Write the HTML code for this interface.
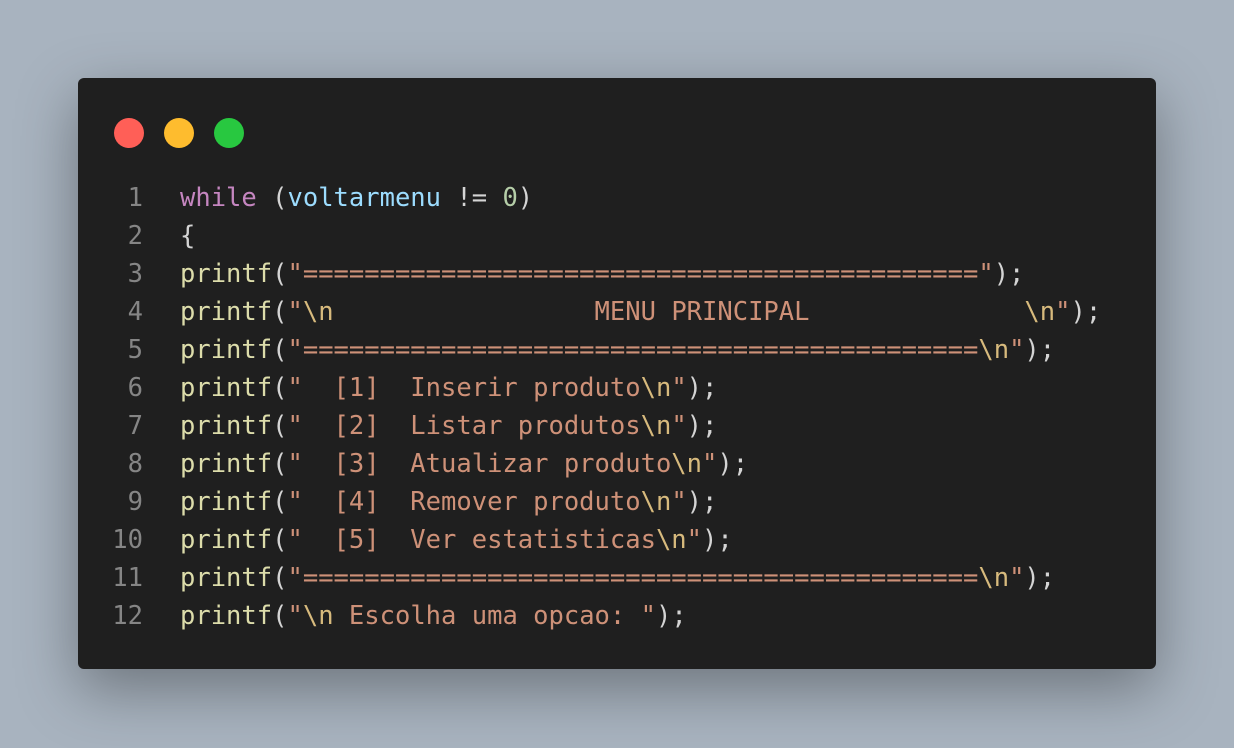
<!DOCTYPE html>
<html><head><meta charset="utf-8"><style>
html,body{margin:0;width:1234px;height:748px;overflow:hidden;background:#a8b3bf;}
.card{position:absolute;left:78px;top:78px;width:1078px;height:591px;background:#1f1f1f;border-radius:6px;box-shadow:0 20px 60px rgba(0,0,0,.35);}
.dot{position:absolute;top:40px;width:30px;height:30px;border-radius:50%;}
pre{position:absolute;left:0;top:101px;margin:0;font-family:"DejaVu Sans Mono","Liberation Mono",monospace;font-size:25.5px;line-height:38px;color:#d4d4d4;letter-spacing:0}
.n{display:inline-block;width:65px;text-align:right;color:#858585;margin-right:37px}
.k{color:#c586c0}.v{color:#9cdcfe}.num{color:#b5cea8}.f{color:#dcdcaa}.s{color:#ce9178}.e{color:#d7ba7d}
</style></head><body>
<div class="card">
<div class="dot" style="left:36px;background:#ff5f57"></div>
<div class="dot" style="left:86px;background:#febc2e"></div>
<div class="dot" style="left:136px;background:#28c840"></div>
<pre><span class="n">1</span><span class="k">while</span> (<span class="v">voltarmenu</span> != <span class="num">0</span>)
<span class="n">2</span>{
<span class="n">3</span><span class="f">printf</span>(<span class="s">"============================================"</span>);
<span class="n">4</span><span class="f">printf</span>(<span class="s">"<span class="e">\n</span>                 MENU PRINCIPAL              <span class="e">\n</span>"</span>);
<span class="n">5</span><span class="f">printf</span>(<span class="s">"============================================<span class="e">\n</span>"</span>);
<span class="n">6</span><span class="f">printf</span>(<span class="s">"  [1]  Inserir produto<span class="e">\n</span>"</span>);
<span class="n">7</span><span class="f">printf</span>(<span class="s">"  [2]  Listar produtos<span class="e">\n</span>"</span>);
<span class="n">8</span><span class="f">printf</span>(<span class="s">"  [3]  Atualizar produto<span class="e">\n</span>"</span>);
<span class="n">9</span><span class="f">printf</span>(<span class="s">"  [4]  Remover produto<span class="e">\n</span>"</span>);
<span class="n">10</span><span class="f">printf</span>(<span class="s">"  [5]  Ver estatisticas<span class="e">\n</span>"</span>);
<span class="n">11</span><span class="f">printf</span>(<span class="s">"============================================<span class="e">\n</span>"</span>);
<span class="n">12</span><span class="f">printf</span>(<span class="s">"<span class="e">\n</span> Escolha uma opcao: "</span>);</pre>
</div>
</body></html>
